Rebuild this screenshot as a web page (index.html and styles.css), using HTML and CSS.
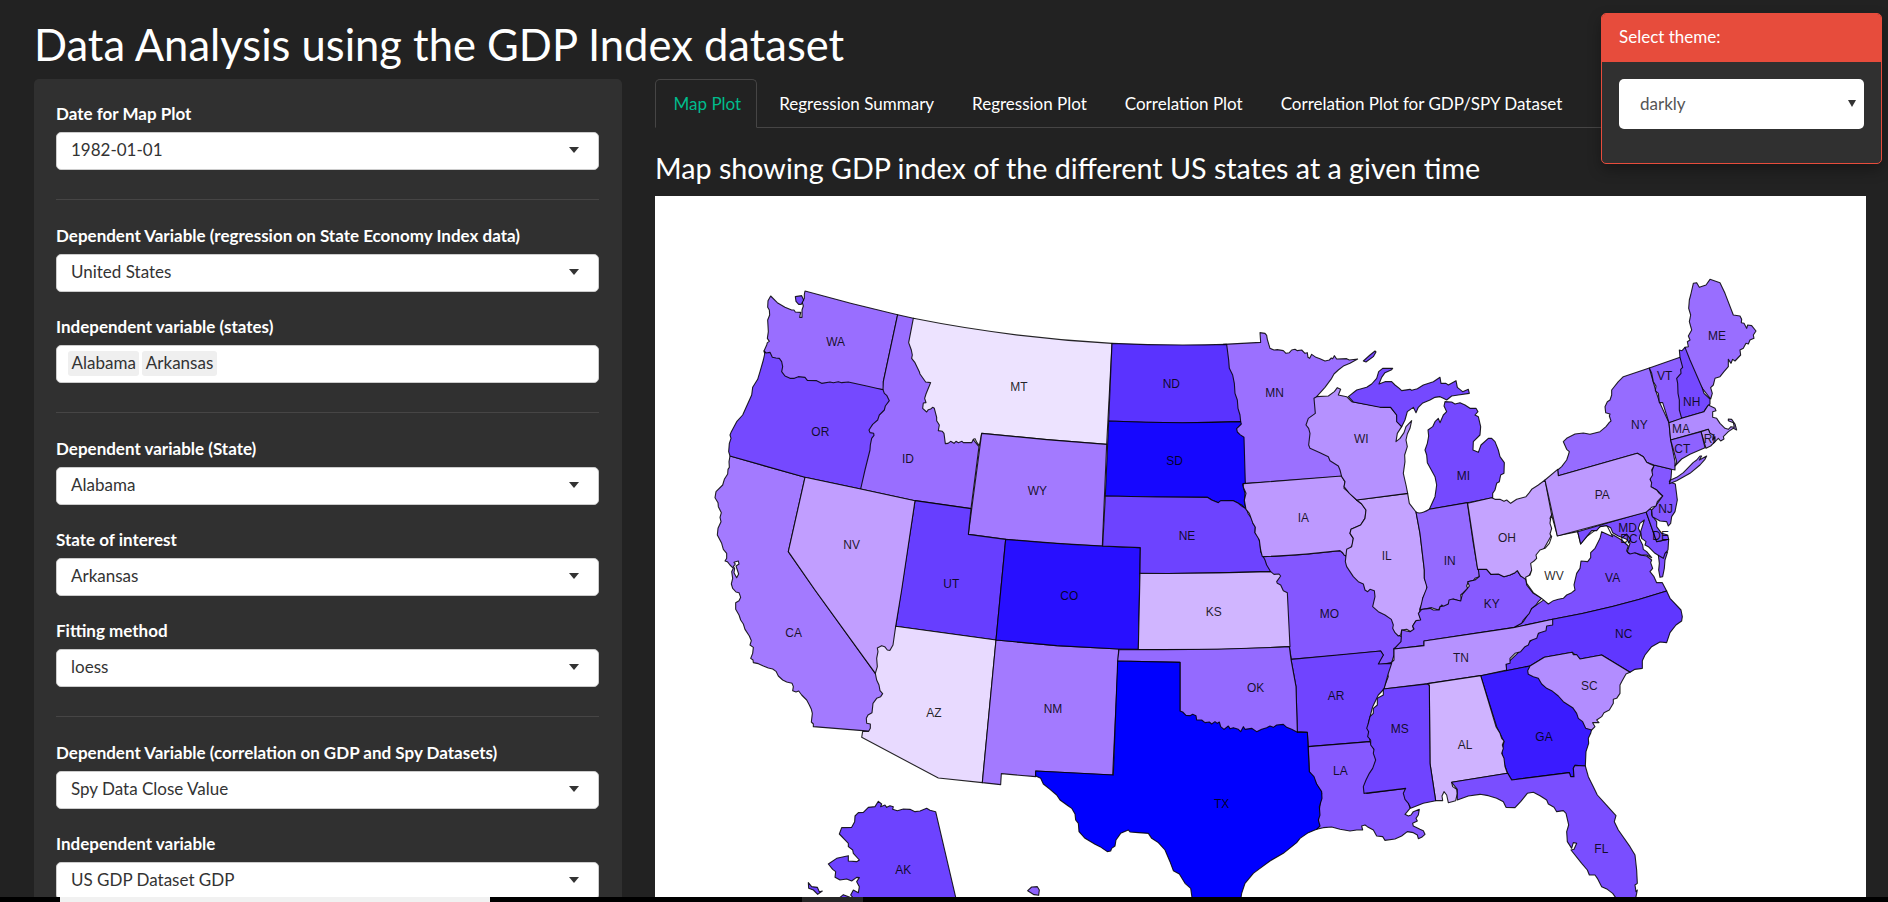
FILE: index.html
```html
<!DOCTYPE html>
<html lang="en">
<head>
<meta charset="utf-8">
<title>Data Analysis using the GDP Index dataset</title>
<link rel="stylesheet" href="styles.css">
</head>
<body>
<main class="app">
  <h1 class="title"><span>Data Analysis using the GDP Index dataset</span></h1>
  <div class="columns">
    <aside class="sidebar">
      <div class="field"><label>Date for Map Plot</label><div class="select"><span>1982-01-01</span><i class="caret"></i></div></div>
      <hr>
      <div class="field"><label>Dependent Variable (regression on State Economy Index data)</label><div class="select"><span>United States</span><i class="caret"></i></div></div>
      <div class="field"><label>Independent variable (states)</label><div class="select multi"><span class="tag">Alabama</span><span class="tag">Arkansas</span></div></div>
      <hr>
      <div class="field"><label>Dependent variable (State)</label><div class="select"><span>Alabama</span><i class="caret"></i></div></div>
      <div class="field"><label>State of interest</label><div class="select"><span>Arkansas</span><i class="caret"></i></div></div>
      <div class="field"><label>Fitting method</label><div class="select"><span>loess</span><i class="caret"></i></div></div>
      <hr>
      <div class="field"><label>Dependent Variable (correlation on GDP and Spy Datasets)</label><div class="select"><span>Spy Data Close Value</span><i class="caret"></i></div></div>
      <div class="field"><label>Independent variable</label><div class="select"><span>US GDP Dataset GDP</span><i class="caret"></i></div></div>
    </aside>
    <section class="content">
      <nav class="tabs">
        <a class="tab active">Map Plot</a><a class="tab">Regression Summary</a><a class="tab">Regression Plot</a><a class="tab">Correlation Plot</a><a class="tab">Correlation Plot for GDP/SPY Dataset</a>
      </nav>
      <h2 class="heading"><span>Map showing GDP index of the different US states at a given time</span></h2>
      <svg class="map" viewBox="655 196 1211 701" width="1211" height="701">
        <g class="states">
          <!-- West -->
          <g transform="translate(690 270) scale(.33333)">
            <path fill="#a37aff" d="M120,558 L345,622 295,845 375,960 556,1210 620,1230 600,1360 536,1384 518,1382 370,1370 370,1362 364,1356 367,1330 364,1318 358,1305 350,1290 335,1275 326,1263 318,1266 308,1262 310,1250 306,1240 290,1236 278,1230 265,1218 258,1204 248,1197 235,1194 220,1188 205,1181 190,1178 189,1170 182,1165 188,1150 190,1132 180,1125 184,1112 178,1098 165,1078 160,1062 152,1050 147,1035 137,1018 137,998 147,992 152,982 147,968 138,966 128,955 124,942 128,925 125,905 130,895 120,885 112,875 105,873 110,865 110,850 100,838 95,820 82,795 84,775 93,755 90,742 94,728 85,710 84,698 75,683 78,665 98,645 103,628 113,612 114,598 118,592 117,575Z"/>
            <path fill="#fff" d="M132,877 L145,873 147,882 138,888 146,912 140,923 132,908 134,895 130,890 136,882Z"/>
            <path fill="#996eff" d="M345,63 Q480,101 623,134 L580,335 581,359 475,350 300,340 228,250 222,243 230,225 232,218 238,214 232,205 235,185 233,150 239,135 238,120 233,112 234,92 242,78 262,98 285,112 305,120 312,120 316,126 332,127 329,142 336,142 336,120 340,108 336,95 343,85 343,73Z"/>
            <path fill="#7549ff" d="M316,80 L335,77 341,90 334,103 326,103 318,94Z"/>
            <path fill="#996eff" d="M623,134 L670,145 700,160 760,400 867,530 843,716 675,692 512,657 500,600 500,400 579,359 580,335Z"/>
            <path fill="#7549ff" d="M222,243 L228,249 240,247 247,262 258,264 268,265 275,275 278,290 275,305 285,318 300,325 313,325 325,320 345,322 352,331 380,332 395,340 420,336 430,338 445,335 455,338 475,336 530,348 579,359 583,370 590,376 598,392 586,408 583,420 568,435 563,450 548,463 537,480 540,488 551,490 552,496 545,505 541,525 540,540 525,600 512,657 345,622 120,558 116,545 118,520 123,505 120,495 124,485 140,455 158,435 185,375 188,352 203,328 210,305 220,270 224,252Z"/>
            <path fill="#ede3ff" d="M670,145 Q960,203 1266,220 L1250,523 1070,509 875,490 868,527 861,518 855,506 850,508 845,518 820,518 816,514 805,518 798,514 792,520 782,514 774,520 766,521 762,490 757,484 745,482 748,465 740,452 740,442 733,415 728,412 722,417 715,419 710,426 698,415 700,399 708,398 704,385 708,372 715,355 722,338 707,336 690,312 688,305 675,278 665,265 667,255 664,240 656,218Z"/>
            <path fill="#a37aff" d="M875,490 L1070,509 1250,523 1237,828 1100,820 947,808 835,793Z"/>
            <path fill="#673eff" d="M675,692 L843,716 835,793 947,808 918,1110 617,1069Z"/>
            <path fill="#c19eff" d="M345,622 L512,657 675,692 635,960 617,1069 630,1160 580,1230 556,1210 375,960 295,845Z"/>
            <path fill="#e8daff" d="M617,1069 L918,1110 877,1538 745,1524 515,1402 518,1384 536,1384 541,1375 541,1362 530,1360 529,1345 534,1335 546,1328 549,1300 560,1285 572,1280 578,1271 570,1262 567,1245 560,1230 556,1210 562,1190 560,1165 564,1145 562,1134 575,1127 584,1130 592,1140 600,1141 609,1125Z"/>
            <path fill="#a37aff" d="M918,1110 L1100,1127 1286,1137 1268,1515 1037,1503 1037,1520 934,1511 932,1544 877,1538Z"/>
            <path fill="#280fff" d="M947,808 Q1150,828 1351,833 L1345,1138 1286,1137 1100,1127 918,1110Z"/>
          </g>
          <!-- Midwest -->
          <g transform="translate(1090 300) scale(.33333)">
            <path fill="#9b70ff" d="M400,133 L512,127 510,98 525,100 530,106 532,118 540,145 552,150 562,149 580,152 588,160 598,158 605,150 615,148 622,152 635,150 645,160 652,158 654,172 659,175 665,163 678,172 690,176 705,183 718,180 724,174 728,176 733,167 740,177 770,176 778,180 803,177 780,190 762,197 745,210 732,222 725,235 705,262 680,290 700,340 760,400 800,520 755,530 465,551 440,400Z"/>
            <path fill="#5a33ff" d="M66,130 Q240,138 410,133 L416,180 418,205 428,225 433,250 435,280 442,300 444,325 450,345 452,365 Q250,372 56,363Z"/>
            <path fill="#1607ff" d="M56,363 Q250,372 452,365 L454,372 440,386 442,396 450,404 462,412 466,551 458,552 465,580 463,605 468,628 455,615 430,602 405,604 385,608 365,600 352,592 Q200,592 46,588Z"/>
            <path fill="#8457ff" d="M517,770 Q640,765 750,752 L768,768 880,780 950,950 925,1005 935,1010 933,1040 920,1045 912,1045 912,1065 905,1088 865,1095 868,1080 880,1065 872,1053 Q740,1068 604,1078 L598,1040 580,878 550,845 520,790Z"/>
            <path fill="#6d43ff" d="M46,588 Q200,592 352,592 L365,600 385,608 392,602 430,602 445,610 455,618 470,628 475,642 485,655 490,672 496,680 495,698 505,710 510,730 512,755 525,780 530,795 542,815 Q340,822 150,820 L151,743 38,738Z"/>
            <path fill="#d0b5ff" d="M150,820 Q340,822 542,815 L552,823 567,822 572,828 560,845 562,850 572,855 580,872 592,878 600,1040 Q350,1052 145,1048Z"/>
            <path fill="#bd99ff" d="M460,551 L755,528 765,545 762,565 780,580 800,600 815,612 828,630 825,655 812,675 783,688 780,700 790,715 787,735 768,768 762,765 758,758 750,752 Q640,765 517,770 L512,750 508,720 495,698 496,682 488,668 478,640 468,628 463,600 468,580 460,562Z"/>
            <path fill="#c4a3ff" d="M800,600 L953,580 958,610 978,636 990,700 1003,810 1003,835 1011,855 1010,870 998,895 998,908 990,925 988,945 994,962 976,965 968,978 972,992 965,997 950,988 935,990 932,1005 925,1008 915,998 908,985 910,975 904,958 885,945 865,935 848,920 855,890 853,872 840,868 833,875 825,870 820,852 805,845 790,830 770,800 766,785 770,748 785,740 790,715 780,700 783,688 812,675 825,655 828,630 815,612Z"/>
            <path fill="#b591ff" d="M680,290 L715,288 733,275 742,263 752,268 745,285 770,290 785,305 840,315 880,322 902,322 920,345 922,365 935,380 922,400 918,425 930,415 942,398 948,380 965,362 960,385 952,402 948,420 952,440 944,465 945,485 940,520 948,555 953,580 800,600 778,580 762,560 765,545 755,530 750,510 745,498 720,482 715,470 690,458 660,445 656,435 660,400 656,385 648,375 655,355 676,340 672,295Z"/>
            <path fill="#7549ff" d="M775,290 L800,270 830,262 845,252 860,235 866,215 878,205 908,205 905,209 885,218 875,232 867,252 885,245 905,245 915,255 928,265 935,272 960,268 965,271 982,266 1000,255 1030,245 1050,232 1053,250 1068,250 1075,255 1098,242 1102,262 1118,275 1135,268 1138,280 1105,285 1085,288 1070,300 1060,295 1050,290 1035,292 1020,300 997,310 985,322 978,338 970,322 952,335 945,360 935,380 920,365 920,345 902,322 870,322 790,306Z"/>
            <path fill="#7549ff" d="M820,183 L840,165 855,153 858,156 850,170 828,186Z"/>
            <path fill="#7549ff" d="M1065,305 L1085,306 1095,312 1110,308 1125,315 1140,325 1158,325 1164,335 1155,345 1165,350 1172,380 1170,405 1150,425 1149,450 1165,457 1173,435 1195,415 1205,415 1215,425 1225,450 1230,470 1243,488 1242,520 1232,525 1228,545 1220,550 1215,570 1208,580 1208,593 1132,608 1018,628 1035,590 1040,555 1035,530 1012,488 1010,465 1005,450 1012,430 1016,408 1014,390 1028,380 1035,365 1045,355 1050,368 1060,345 1070,335 1062,318Z"/>
            <path fill="#946aff" d="M978,636 Q990,645 1018,628 L1132,608 1150,730 1163,805 1168,815 1168,830 1155,835 1150,842 1135,845 1130,858 1133,865 1120,878 1112,885 1115,905 1090,897 1085,912 1075,912 1065,922 1055,915 1045,930 1025,923 990,930 998,895 1011,862 1003,835 1003,810 990,700Z"/>
          </g>
          <!-- Southeast -->
          <g transform="translate(1400 530) scale(.33333)">
            <path fill="#7d50ff" d="M340,293 L458,268 Q640,235 800,183 L787,158 770,158 762,140 750,125 758,115 752,98 755,90 740,78 720,75 700,65 685,70 680,62 685,48 665,30 640,15 605,5 560,50 445,200 395,235 370,275Z"/>
            <path fill="#7d50ff" d="M775,75 L803,65 795,90 793,115 788,140 780,142 776,120 778,100Z"/>
            <path fill="#6037ff" d="M458,268 Q640,235 800,183 L810,205 843,240 847,260 845,273 828,285 810,308 800,338 780,336 755,350 735,375 727,392 727,415 705,418 690,427 605,375 540,387 517,367 433,382 390,408 318,422 318,403 400,325Z"/>
            <path fill="#875aff" d="M5,300 L30,305 38,300 42,297 38,288 48,272 62,270 55,250 65,238 90,235 100,240 118,240 120,230 132,228 145,222 147,210 158,207 182,213 187,193 200,178 208,168 203,155 225,150 238,140 235,118 260,118 273,133 295,132 312,140 330,135 345,128 352,122 362,138 377,142 380,165 400,190 425,205 415,215 408,225 395,235 388,250 370,270 365,280 340,293 72,333 72,347 -18,357 3,335Z"/>
            <path fill="#b692ff" d="M-18,357 L72,347 72,333 340,293 458,268 458,285 440,288 438,302 415,310 410,325 390,332 385,345 375,350 362,365 345,370 330,385 330,400 318,403 320,420 242,437 83,461 -50,477 -35,440 -40,425 -28,400 -18,390Z"/>
            <path fill="#3a1bff" d="M242,437 L318,422 390,408 450,420 575,590 575,598 572,610 565,625 566,640 558,665 556,708 525,706 520,715 522,740 512,740 508,728 335,750 323,730 312,700 305,665 312,635 290,590Z"/>
            <path fill="#b28dff" d="M390,408 L433,382 517,367 520,374 530,374 540,387 605,375 690,427 678,432 665,455 660,465 660,490 650,505 640,508 640,520 628,540 612,548 605,560 590,570 597,578 578,578 585,590 575,600 557,595 548,575 535,565 530,550 518,533 490,515 475,498 455,482 440,475 425,462 415,445 400,440 385,433 383,422Z"/>
            <path fill="#cfb3ff" d="M83,461 L242,437 288,590 300,610 305,625 312,633 307,645 310,655 305,670 312,685 315,710 322,730 155,757 158,770 170,778 172,790 167,812 145,818 140,795 132,785 126,798 128,812 107,812 90,700 88,465Z"/>
            <path fill="#7a4eff" d="M155,757 L323,730 335,750 508,728 512,740 522,740 520,715 525,706 556,708 565,740 580,770 592,795 610,815 648,857 643,875 655,900 690,950 705,975 710,1020 712,1060 705,1065 708,1085 712,1080 706,1110 652,1110 638,1090 622,1078 605,1070 592,1045 585,1035 568,1035 562,1020 545,1000 513,960 522,958 530,940 520,938 515,955 502,935 500,905 506,885 498,850 490,842 470,845 462,832 445,822 440,810 420,797 400,787 382,790 370,805 362,815 345,833 318,832 310,815 290,805 265,797 240,793 205,798 172,810 172,778Z"/>
          </g>
          <!-- South central -->
          <g transform="translate(1090 560) scale(.33333)">
            <path fill="#7044ff" d="M603,298 L872,273 880,285 865,312 905,310 895,340 882,387 865,405 848,440 835,490 840,545 655,560 652,517 622,515 618,380Z"/>
            <path fill="#946aff" d="M87,268 Q350,272 598,260 L603,298 618,380 622,515 622,540 270,540 270,307 83,303Z"/>
            <path fill="#8659ff" d="M655,560 L840,545 870,600 840,670 830,700 947,685 960,745 952,755 945,763 955,768 963,765 970,755 988,748 985,765 978,775 982,783 968,790 970,798 990,808 1000,812 1005,823 995,832 985,836 982,825 970,818 952,815 935,828 915,837 885,841 878,830 860,828 850,810 832,800 825,795 815,798 818,810 800,810 780,813 750,808 725,801 700,803 680,808 688,750 695,700 658,635Z"/>
            <path fill="#7044ff" d="M880,387 L1013,372 1018,378 1020,610 1037,722 1000,730 962,745 955,730 945,718 940,700 947,685 822,700 820,680 828,660 838,640 848,625 857,600 850,580 852,568 842,555 842,540 833,530 836,515 830,505 835,490 840,470 850,460 850,445 862,435 862,415 880,405Z"/>
            <path fill="#00f" d="M83,303 L270,307 270,453 278,456 288,466 300,467 308,463 318,467 320,480 335,480 345,488 358,486 365,492 375,485 382,490 388,486 392,500 402,508 415,498 420,506 430,503 445,508 452,515 460,500 465,508 485,505 500,515 515,508 530,503 540,498 550,502 560,495 580,493 590,502 605,508 622,517 652,517 658,635 672,650 680,672 695,695 696,715 688,740 690,765 685,780 690,798 680,808 655,818 630,835 620,848 580,880 540,903 510,925 490,940 465,970 455,1000 452,1020 307,1020 302,985 285,970 268,942 250,932 240,905 225,870 205,848 185,835 175,820 145,818 120,816 115,810 92,820 78,840 75,858 65,865 62,873 52,875 30,860 15,853 -15,835 -33,815 -35,790 -43,780 -45,762 -55,745 -65,738 -90,720 -100,705 -120,688 -140,672 -148,655 -163,648 -163,633 70,645Z"/>
          </g>
          <!-- Northeast -->
          <g transform="translate(1400 260) scale(.33333)">
            <path fill="#c4a3ff" d="M203,730 L275,713 285,718 300,718 312,724 320,720 332,730 350,718 378,710 388,698 395,688 415,675 435,660 455,765 450,775 458,795 452,830 435,860 380,960 362,948 352,932 345,938 330,945 312,950 295,942 273,943 260,928 233,928Z"/>
            <path fill="#fff" d="M455,765 L472,827 533,815 542,852 560,830 600,800 620,795 638,830 605,815 600,835 585,865 572,878 572,893 563,905 543,903 540,925 530,940 522,975 525,990 515,998 500,1005 490,1015 475,1018 460,1022 445,1032 425,1015 400,998 380,970 377,952 390,945 395,930 392,910 402,903 410,895 408,885 420,870 435,865 448,850 455,830 450,822 455,805 450,790 452,775Z"/>
            <path fill="#7a4eff" d="M533,815 L738,755 770,845 806,838 804,870 795,880 790,895 782,890 765,880 745,860 735,855 738,845 725,835 722,815 733,780 720,790 715,805 722,820 718,835 728,855 730,868 740,875 755,893 740,885 725,885 705,878 690,882 682,875 690,850 680,838 655,828 638,818 632,803 620,797 600,800 590,812 575,812 560,830 542,852Z"/>
            <path fill="none" d="M668,832 L680,822 692,838 684,850"/>
            <path fill="#7a4eff" d="M738,755 L745,745 755,750 755,765 770,785 770,800 785,820 803,825 806,838 770,845Z"/>
            <path fill="#8457ff" d="M762,615 L815,628 813,655 808,665 826,672 832,720 825,755 815,770 812,790 805,798 800,785 780,783 757,770 755,750 765,740 788,708 770,690 752,680 750,650Z"/>
            <path fill="#966cff" d="M473,630 L485,620 500,600 505,585 508,575 500,568 490,545 500,535 525,522 550,519 570,523 600,515 618,500 628,487 633,483 628,468 630,462 617,458 615,440 622,425 630,420 635,405 635,390 655,365 670,350 748,324 768,395 780,430 807,488 812,540 825,605 825,630 815,628 762,615 740,607 730,590 712,580 475,647Z"/>
            <path fill="#966cff" d="M812,660 L830,652 850,638 880,607 890,600 900,588 905,588 898,600 920,588 915,598 900,615 870,640 830,662 808,671Z"/>
            <path fill="#bd99ff" d="M435,660 L473,628 475,647 712,580 730,590 740,607 750,612 762,617 755,630 758,645 750,658 755,668 753,680 770,690 778,700 788,708 772,725 768,738 755,742 738,757 472,828Z"/>
            <path fill="#8c5fff" d="M748,324 L840,292 860,325 850,475 807,488 795,450 788,428 778,428 775,400 766,392 768,378 760,365 755,340Z"/>
            <path fill="#996eff" d="M855,262 L865,260 862,245 870,240 865,228 875,210 868,185 872,165 866,145 868,120 872,105 880,70 890,68 898,82 918,75 930,58 960,68 975,100 1000,165 1020,168 1025,178 1024,188 1032,190 1040,205 1043,195 1055,197 1068,213 1060,225 1062,235 1050,240 1045,252 1038,250 1030,265 1020,270 1022,285 1005,303 998,298 993,310 985,298 985,320 972,335 960,350 945,355 940,375 932,383 937,400 932,417 907,385 850,300Z"/>
            <path fill="#7549ff" d="M840,292 L838,270 846,272 855,262 870,300 907,385 912,400 930,417 930,432 922,440 912,455 845,475 838,450 838,420 834,400 833,370 830,355 843,340 842,328 848,322Z"/>
            <path fill="#b08bff" d="M807,488 L845,475 912,455 925,435 945,445 948,452 938,455 938,472 950,475 960,490 975,505 985,508 993,500 1003,502 1000,488 985,482 985,477 995,478 1005,492 1010,510 1000,505 985,515 970,530 972,537 962,543 955,535 940,550 925,508 812,540Z"/>
            <path fill="#b08bff" d="M903,515 L925,508 930,520 940,525 938,540 945,530 945,545 932,558 918,565Z"/>
            <path fill="#8e62ff" d="M812,540 L903,515 915,563 870,583 845,597 825,618 830,605Z"/>
          </g>
          <!-- Alaska and Hawaii insets -->
          <g transform="translate(690 560) scale(.33333)">
            <path fill="#6d43ff" d="M565,724 L575,732 572,740 585,735 590,742 600,737 610,740 608,748 622,752 640,747 660,748 675,755 690,753 710,745 720,751 737,755 799,1020 495,1020 482,1005 490,990 505,998 508,980 500,965 508,953 500,952 485,963 470,957 450,960 435,952 437,935 428,928 415,912 440,895 475,887 475,903 500,905 508,900 490,880 488,870 475,860 475,850 448,822 455,803 485,802 494,785 495,768 505,758 520,757 535,742 555,740Z"/>
            <path fill="#6d43ff" d="M355,968 L365,980 382,982 388,995 397,993 383,1003 370,990 356,985Z"/>
            <path fill="#6d43ff" d="M450,1012 L460,1004 480,1012 480,1022 452,1022Z"/>
            <path fill="#8e62ff" d="M1013,992 L1025,981 1042,980 1048,990 1046,1006 1032,1004Z"/>
          </g>
        </g>
        <g class="codes">
          <g transform="translate(690 270) scale(.33333)"><text x="437" y="228">WA</text><text x="391" y="498">OR</text><text x="654" y="579">ID</text><text x="987" y="363">MT</text><text x="1042" y="675">WY</text><text x="485" y="837">NV</text><text x="784" y="953">UT</text></g>
          <g transform="translate(690 560) scale(.33333)"><text x="311" y="231">CA</text><text x="732" y="472">AZ</text><text x="1089" y="459">NM</text><text x="640" y="942">AK</text><text x="1138" y="120">CO</text></g>
          <g transform="translate(1090 300) scale(.33333)"><text x="244" y="264">ND</text><text x="554" y="291">MN</text><text x="254" y="496">SD</text><text x="814" y="429">WI</text><text x="1120" y="540">MI</text><text x="291" y="720">NE</text><text x="640" y="666">IA</text><text x="890" y="780">IL</text><text x="1079" y="794">IN</text></g>
          <g transform="translate(1400 260) scale(.33333)"><text x="951" y="240">ME</text><text x="794" y="360">VT</text><text x="875" y="438">NH</text><text x="718" y="507">NY</text><text x="843" y="519">MA</text><text x="929" y="549">RI</text><text x="847" y="580">CT</text><text x="607" y="717">PA</text><text x="797" y="760">NJ</text><text x="683" y="816">MD</text><text x="687" y="849">DC</text><text x="782" y="840">DE</text><text x="321" y="846">OH</text></g>
          <g transform="translate(1090 560) scale(.33333)"><text x="371" y="168">KS</text><text x="497" y="396">OK</text><text x="718" y="174">MO</text><text x="1113" y="306">TN</text><text x="738" y="420">AR</text><text x="929" y="519">MS</text><text x="1125" y="567">AL</text><text x="751" y="645">LA</text><text x="395" y="743">TX</text></g>
          <g transform="translate(1400 530) scale(.33333)"><text x="462" y="150">WV</text><text x="638" y="156">VA</text><text x="275" y="234">KY</text><text x="671" y="324">NC</text><text x="568" y="480">SC</text><text x="432" y="634">GA</text><text x="604" y="969">FL</text></g>
        </g>
      </svg>
    </section>
  </div>
</main>
<footer class="taskbar"><span class="search"></span><span class="task"></span></footer>
<div class="theme">
  <div class="theme-head">Select theme:</div>
  <div class="theme-body"><div class="theme-select"><span>darkly</span><i class="arrow"></i></div></div>
</div>
</body>
</html>
```
FILE: styles.css
```css
* { box-sizing: border-box; }
body {
  margin: 0;
  width: 1888px;
  height: 902px;
  overflow: hidden;
  position: relative;
  display: flex;
  flex-direction: column;
  background: #222;
  color: #fff;
  font: 17px/26px Lato, sans-serif;
}
.app { height: 897px; flex: none; overflow: hidden; padding: 0 22px 0 34px; }
.title {
  margin: 0;
  height: 79px;
  padding-top: 19px;
  font-size: 43.5px;
  font-weight: 400;
  line-height: 50px;
  white-space: nowrap;
}
.columns { display: flex; gap: 33px; align-items: flex-start; }
.sidebar {
  width: 588px;
  height: 900px;
  flex: none;
  padding: 22px 23px 0 22px;
  background: #303030;
  border-radius: 5px;
}
.field { margin-bottom: 22px; }
.field label {
  display: block;
  height: 26px;
  margin-bottom: 5px;
  font-size: 17px;
  font-weight: 700;
  white-space: nowrap;
}
.sidebar hr { height: 1px; margin: 29px 0 23px; border: 0; background: #464545; }
.select {
  height: 38px;
  display: flex;
  align-items: center;
  justify-content: space-between;
  padding: 0 19px 3px 14px;
  background: #fff;
  border: 1px solid #ccc;
  border-radius: 5px;
  color: #333;
}
.multi { justify-content: flex-start; gap: 3px; padding-left: 11px; padding-bottom: 1px; }
.tag { padding: 0 3.5px; height: 25px; line-height: 23px; background: #efefef; border-radius: 3px; }
.caret { border: 5.5px solid transparent; border-top: 6px solid #333; border-bottom: 0; }
.content { width: 1211px; flex: none; }
.tabs { display: flex; gap: 3.2px; height: 49px; border-bottom: 1px solid #464545; }
.tab {
  height: 49px;
  padding: 11px 15.2px 10px 17.6px;
  border: 1px solid transparent;
  border-radius: 5px 5px 0 0;
  white-space: nowrap;
}
.active { color: #00bc8c; background: #222; border-color: #464545; border-bottom-color: #222; }
.heading {
  margin: 0;
  height: 68px;
  padding-top: 22px;
  font-size: 28.7px;
  font-weight: 400;
  line-height: 36px;
  white-space: nowrap;
}
.map { display: block; background: #fff; }
.states { stroke: #000; stroke-width: 3.3; stroke-opacity: .85; stroke-linejoin: round; }
.codes { font: 36px "Liberation Sans", Arial, sans-serif; fill: #000; fill-opacity: .85; text-anchor: middle; }
.taskbar { height: 5px; flex: none; display: flex; background: #000; }
.search { width: 430px; margin-left: 60px; background: #f1f1f1; }
.task { width: 61px; margin-left: 312px; background: #262626; }
.theme {
  position: absolute;
  left: 1601px;
  top: 13px;
  width: 281px;
  height: 151px;
  background: #303030;
  border: 1px solid #e74c3c;
  border-radius: 5px;
  box-shadow: 0 6px 14px rgba(0, 0, 0, .3);
}
.theme-head { height: 48px; padding: 10px 17px; background: #e74c3c; border-radius: 4px 4px 0 0; }
.theme-body { padding: 17px; }
.theme-select {
  height: 50px;
  display: flex;
  align-items: center;
  justify-content: space-between;
  padding: 0 8px 1px 21px;
  background: #fff;
  border-radius: 5px;
  color: #555;
}
.arrow { border: 4px solid transparent; border-top: 7px solid #333; border-bottom: 0; }
```
